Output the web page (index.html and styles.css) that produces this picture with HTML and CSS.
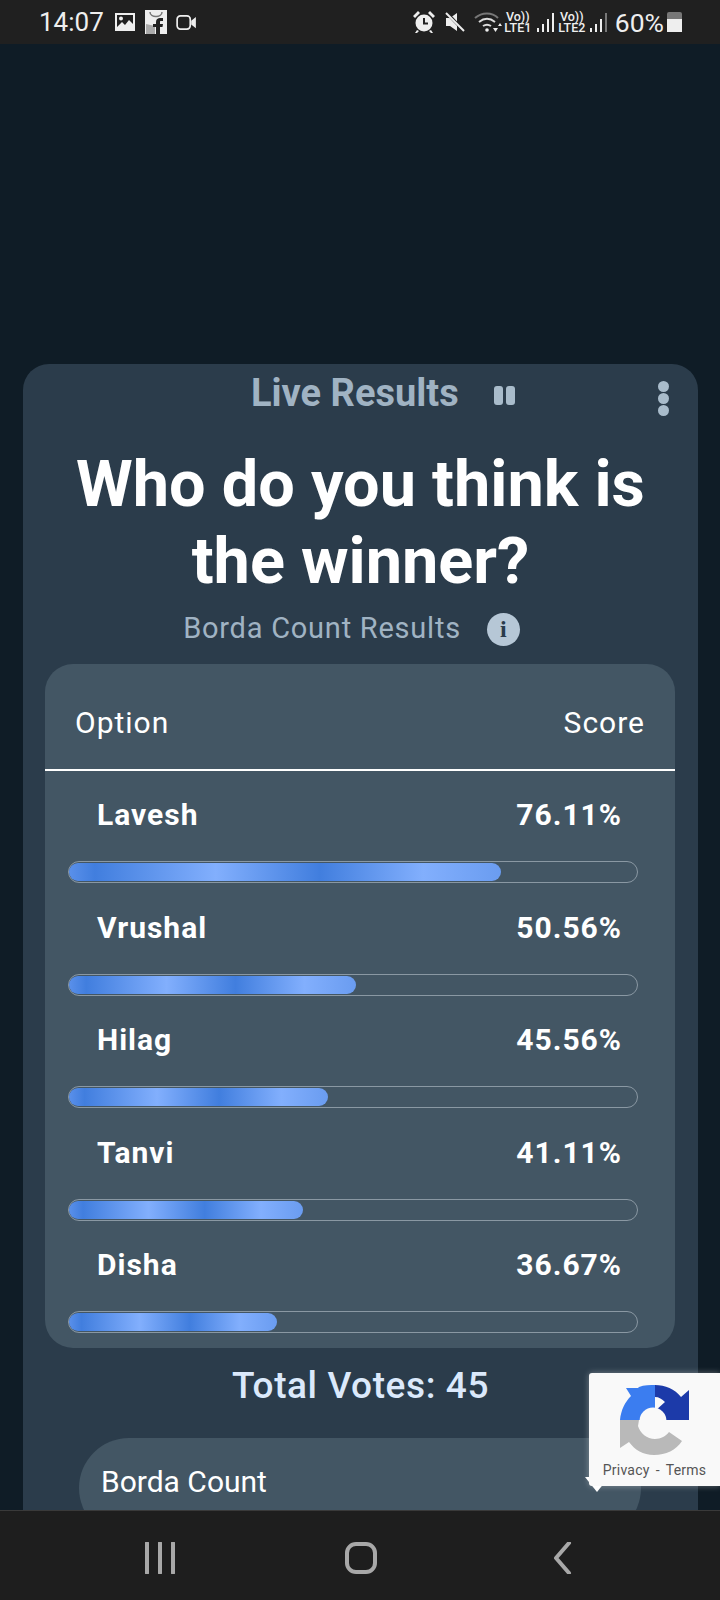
FILE: index.html
```html
<!DOCTYPE html>
<html lang="en">
<head>
<meta charset="utf-8">
<title>Live Results</title>
<link rel="stylesheet" href="styles.css">
</head>
<body>
<div class="phone">
  <header class="status">
    <span class="time">14:07</span>
    <svg class="ic-gallery" viewBox="0 0 20 18"><path fill="#eee" fill-rule="evenodd" d="M0 0h20v18H0zM2 2v12l5-5 3 3 4-5 4 4V2z"/><circle cx="6" cy="5.500" r="2" fill="#eee"/></svg>
    <svg class="ic-shop" viewBox="0 0 22 24"><path fill="#eee" d="M0 0h22v24H0z"/><path fill="none" stroke="#777" stroke-width="1.500" d="M5 2c0 6 12 6 12 0"/><path fill="#aaa" d="M1 14l9 2v8H1z"/><path fill="#222" d="M11 24v-7H8v-3h3v-2c0-3 2-4 4-4h3v3h-2c-1 0-1 .5-1 1v2h3l-.5 3H15v7z"/></svg>
    <svg class="ic-video" viewBox="0 0 22 16"><rect x="1" y="1" width="14" height="14" rx="3.500" fill="none" stroke="#eee" stroke-width="1.800"/><path fill="#eee" d="M16 6l5-4v12l-5-4z"/></svg>
    <span class="status-gap"></span>
    <svg class="ic-alarm" viewBox="0 0 24 24"><circle cx="12" cy="13" r="8.500" fill="#eee"/><path fill="none" stroke="#222" stroke-width="2" d="M12 8v5.500h4"/><path fill="#eee" d="M1 6l5-5 2 2-5 5zM23 6l-5-5-2 2 5 5zM5 20l-2 3h2l2-2zM19 20l2 3h-2l-2-2z"/></svg>
    <svg class="ic-mute" viewBox="0 0 20 20"><path fill="#eee" d="M1 6h4l7-5v18l-7-5H1z"/><path stroke="#222" stroke-width="3" d="M1 0l18 19"/><path stroke="#eee" stroke-width="2" d="M1 1l18 18"/></svg>
    <svg class="ic-wifi" viewBox="0 0 28 20"><path fill="none" stroke="#777" stroke-width="2" d="M1 6c7-6 17-6 23 0"/><path fill="none" stroke="#ddd" stroke-width="2" d="M5 10c5-4 11-4 16 0M9 14c3-2 5-2 8 0"/><circle cx="13" cy="18" r="1.800" fill="#eee"/><path fill="#eee" d="M19 16h5l-2.500 4zM24 14h4l-2-3z"/></svg>
    <span class="sim"><b>Vo))</b><b>LTE1</b></span>
    <span class="bars"><i class="b1"></i><i class="b2"></i><i class="b3"></i><i class="b4"></i></span>
    <span class="sim sim2"><b>Vo))</b><b>LTE2</b></span>
    <span class="bars"><i class="b1"></i><i class="b2"></i><i class="b3"></i><i class="b4 dim"></i></span>
    <span class="pct">60%</span>
    <span class="battery"><i></i></span>
  </header>

  <main class="page">
    <section class="card">
      <div class="head">
        <span class="live">Live Results</span>
        <span class="pause"><i></i><i></i></span>
        <span class="kebab"><i></i><i></i><i></i></span>
      </div>
      <h1 class="title">Who do you think is<br>the winner?</h1>
      <div class="sub">
        <span>Borda Count Results</span>
        <span class="info">i</span>
      </div>
      <div class="table">
        <div class="thead"><span>Option</span><span>Score</span></div>
        <div class="row">
          <div class="row-top"><span>Lavesh</span><span>76.11%</span></div>
          <div class="track"><div class="fill" style="width:76.11%"></div></div>
        </div>
        <div class="row">
          <div class="row-top"><span>Vrushal</span><span>50.56%</span></div>
          <div class="track"><div class="fill" style="width:50.56%"></div></div>
        </div>
        <div class="row">
          <div class="row-top"><span>Hilag</span><span>45.56%</span></div>
          <div class="track"><div class="fill" style="width:45.56%"></div></div>
        </div>
        <div class="row">
          <div class="row-top"><span>Tanvi</span><span>41.11%</span></div>
          <div class="track"><div class="fill" style="width:41.11%"></div></div>
        </div>
        <div class="row">
          <div class="row-top"><span>Disha</span><span>36.67%</span></div>
          <div class="track"><div class="fill" style="width:36.67%"></div></div>
        </div>
      </div>
      <div class="total">Total Votes: 45</div>
      <div class="select"><span>Borda Count</span><i class="caret"></i></div>
    </section>
    <aside class="recaptcha">
      <svg class="rc-logo" viewBox="0 0 70 70">
        <path fill="#3b7df0" d="M35 0v35H0C1 25 5 17 11 11L6 3h12l1-1c5-2 11-2 17-2z"/>
        <path fill="#1c3aa9" d="M35 0c10 0 20 4 26 12l8-7v30H35l0-9 10-9c-3-3-6-5-10-5z"/>
        <path fill="#b9b9b9" d="M0 35h19l-1 6c2 7 9 13 17 13 6 0 11-3 14-7l13 9C56 65 46 70 34 70 23 70 15 65 9 57l-9 6z"/>
        <circle cx="33" cy="36" r="13.500" fill="#f9f9f9"/>
        <path fill="#f9f9f9" d="M42 35h8l-3 8-6-2z"/>
      </svg>
      <div class="rc-links">Privacy<span class="rc-dash">-</span>Terms</div>
    </aside>
  </main>

  <nav class="nav">
    <svg class="nav-ic" viewBox="0 0 32 32"><path d="M3 1v30M16 1v30M29 1v30"/></svg>
    <svg class="nav-ic" viewBox="0 0 32 32"><rect x="2" y="2" width="28" height="28" rx="9"/></svg>
    <svg class="nav-ic" viewBox="0 0 32 32"><path d="M23 1L10 16l13 15"/></svg>
  </nav>
</div>
</body>
</html>
```
FILE: styles.css
```css
* { box-sizing: border-box; }
html, body { margin: 0; padding: 0; }
body { background: #0f1c26; font-family: Roboto, "Noto Sans", sans-serif; }
.phone { width: 720px; height: 1600px; display: flex; flex-direction: column; overflow: hidden; }

/* status bar */
.status { height: 44px; flex: none; background: #202020; display: flex; align-items: center; padding: 0 38px 0 39px; color: #eee; }
.time { font-size: 26px; margin-right: 11px; }
.ic-gallery { width: 20px; height: 18px; margin-right: 10px; }
.ic-shop { width: 22px; height: 24px; margin-right: 9px; }
.ic-video { width: 21px; height: 15px; }
.status-gap { flex: 1; }
.ic-alarm { width: 24px; height: 24px; margin-right: 9px; }
.ic-mute { width: 20px; height: 20px; margin-right: 9px; }
.ic-wifi { width: 28px; height: 20px; margin-right: 2px; }
.sim { display: flex; flex-direction: column; align-items: center; font-size: 12.500px; line-height: 11px; width: 28px; margin-right: 5px; }
.sim b { font-weight: 500; }
.sim2 { margin-left: 4px; margin-right: 4px; }
.bars { display: flex; align-items: flex-end; gap: 3px; height: 19px; }
.bars i { width: 2px; background: #eee; display: block; }
.b1 { height: 4px; } .b2 { height: 8px; } .b3 { height: 13px; } .b4 { height: 19px; }
.bars .dim { background: #777; }
.pct { font-size: 26.500px; margin-left: 8px; margin-right: 3px; }
.battery { width: 15px; height: 20px; background: #777; display: flex; align-items: flex-end; border-radius: 2px 2px 0 0; }
.battery i { display: block; width: 100%; height: 13px; background: #eee; }

/* page + card */
.page { flex: 1; min-height: 0; overflow: hidden; position: relative; padding: 320px 22px 0 23px; }
.card { height: 1200px; background: #2b3c4b; border-radius: 26px; padding: 0 22px; }
.head { height: 57px; display: flex; align-items: center; padding-left: 206px; }
.live { font-size: 38px; font-weight: 700; color: #a0b3c3; }
.pause { display: flex; gap: 3px; margin-left: 35px; margin-top: 5px; }
.pause i { display: block; width: 9px; height: 19px; background: #a9bccb; border-radius: 3px; }
.kebab { display: flex; flex-direction: column; gap: 1px; margin-left: auto; margin-right: 7px; margin-top: 11px; }
.kebab i { display: block; width: 11px; height: 11px; border-radius: 50%; background: #a9bccb; }
.title { margin: 25px 0 0; font-size: 64.800px; line-height: 76.500px; font-weight: 700; text-align: center; color: #fff; }
.sub { margin-top: 9px; height: 40px; display: flex; align-items: center; justify-content: center; gap: 26px; font-size: 29px; color: #a0b3c3; letter-spacing: .76px; padding-right: 18px; }
.info { width: 33px; height: 33px; border-radius: 50%; background: #b6c7d6; color: #2b3c4b; font: 700 24px/33px "Liberation Serif", serif; text-align: center; letter-spacing: 0; margin-top: 3px; }

/* table */
.table { margin-top: 16px; width: 630px; height: 684px; background: #435664; border-radius: 28px; }
.thead { height: 107px; border-bottom: 2px solid #fff; display: flex; align-items: center; justify-content: space-between; padding: 12px 30px 0 30px; font-size: 30px; letter-spacing: 1px; color: #fff; }
.row { height: 112.500px; padding: 0 37px 0 23px; }
.row-top { height: 90px; display: flex; justify-content: space-between; align-items: center; padding: 0 16px 3px 29px; font-size: 30px; font-weight: 700; letter-spacing: 1px; color: #fff; }
.track { height: 22px; border: 1px solid #8a98a3; border-radius: 11px; padding: 1px 0; }
.fill { height: 100%; border-radius: 9px; background: linear-gradient(90deg, #5a90ea 0%, #417ede 6%, #82affd 34%, #417ede 58%, #82affd 82%, #6a9cf0 100%); }

.total { margin-top: 16px; font-size: 37px; font-weight: 500; letter-spacing: .6px; color: #dbe9fb; text-align: center; }
.select { margin: 31px 0 0 34px; width: 562px; height: 100px; background: #435664; border-radius: 50px; display: flex; padding: 26px 32px 0 22px; justify-content: space-between; font-size: 30px; color: #fff; }
.caret { width: 0; height: 0; margin-top: 13px; border-left: 12px solid transparent; border-right: 12px solid transparent; border-top: 15px solid #fff; }

/* recaptcha badge */
.recaptcha { position: absolute; left: 589px; top: 1329px; width: 131px; height: 113px; background: #f9f9f9; border-radius: 3px 0 0 3px; box-shadow: 0 0 6px rgba(255,255,255,.35); display: flex; flex-direction: column; align-items: center; padding-top: 12px; }
.rc-logo { width: 70px; height: 70px; display: block; }
.rc-links { margin-top: 7px; font-size: 14px; color: #555; white-space: nowrap; letter-spacing: .24px; }
.rc-dash { margin: 0 6px; }

/* nav */
.nav { height: 90px; flex: none; background: #1e1e1e; border-top: 1px solid #3a3a3a; display: grid; grid-template-columns: 320px 80px 320px; padding: 31px 0 0; }
.nav-ic { width: 32px; height: 32px; fill: none; stroke: #a8a8a8; stroke-width: 4; stroke-linecap: round; stroke-linejoin: round; }
.nav-ic:nth-child(1) { justify-self: end; margin-right: 144px; }
.nav-ic:nth-child(2) { justify-self: center; margin-left: 2px; }
.nav-ic:nth-child(3) { margin-left: 146px; }
```
